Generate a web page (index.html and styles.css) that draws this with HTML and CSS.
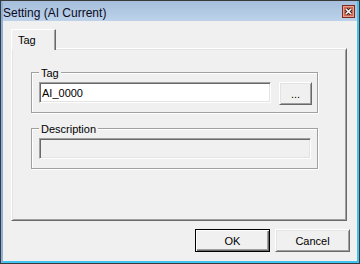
FILE: index.html
```html
<!DOCTYPE html>
<html lang="en">
<head>
    <meta charset="UTF-8">
    <title>Setting (AI Current)</title>
    <link rel="stylesheet" href="styles.css">
</head>
<body>
    <div class="window">
        <div class="frame">
            <div class="titlebar">
                <span class="title">Setting (AI Current)</span>
                <span class="close">
                    <svg width="13" height="13" viewBox="0 0 13 13">
                        <rect x="0.5" y="0.5" width="12" height="12" fill="#cf6b57" stroke="#7a2a1e"/>
                        <rect x="1.5" y="1.5" width="10" height="10" fill="none" stroke="#e6a090"/>
                        <path d="M4 4 L9 9 M9 4 L4 9" stroke="#3a1a14" stroke-width="3.2"/>
                        <path d="M4 4 L9 9 M9 4 L4 9" stroke="#fff" stroke-width="1.6"/>
                    </svg>
                </span>
            </div>

            <div class="client">
                <div class="tabs">
                    <div class="tab">Tag</div>
                </div>

                <div class="panel">
                    <div class="group">
                        <span class="group-label">Tag</span>
                        <div class="row">
                            <input class="textbox" type="text" value="AI_0000">
                            <button class="btn btn-browse">...</button>
                        </div>
                    </div>

                    <div class="group group-desc">
                        <span class="group-label">Description</span>
                        <div class="row">
                            <input class="textbox" type="text" disabled>
                        </div>
                    </div>
                </div>

                <div class="actions">
                    <button class="btn btn-default">OK</button>
                    <button class="btn">Cancel</button>
                </div>
            </div>
        </div>
    </div>
</body>
</html>
```

FILE: styles.css
```css
* {
    box-sizing: border-box;
}
body {
    margin: 0;
    font-family: "Liberation Sans", Arial, sans-serif;
    font-size: 11px;
    color: #000;
    background: #fff;
}
.window {
    width: 360px;
    height: 264px;
    border: 1px solid #3a3a3a;
}
.frame {
    height: 100%;
    display: flex;
    flex-direction: column;
    border-left: 2px solid #8cb2dc;
    border-right: 2px solid #42c2ee;
    border-bottom: 2px solid #42c2ee;
}
.titlebar {
    height: 20px;
    display: flex;
    align-items: flex-start;
    background: linear-gradient(#a6bedb, #bdd2ea);
}
.title {
    font-size: 12px;
    line-height: 14px;
    margin-top: 5px;
    color: #0a0a1e;
}
.close {
    margin-left: auto;
    margin-top: 4px;
    margin-right: 2px;
    width: 13px;
    height: 13px;
}
.close svg {
    display: block;
}
.client {
    flex: 1;
    display: flex;
    flex-direction: column;
    background: #f0f0f0;
    padding: 8px 7px 9px 8px;
}
.tabs {
    display: flex;
}
.tab {
    position: relative;
    z-index: 1;
    width: 45px;
    height: 21px;
    margin-bottom: -2px;
    padding: 4px 0 0 6px;
    line-height: 13px;
    background: #f0f0f0;
    border-top: 1px solid #fff;
    border-left: 1px solid #fff;
    border-right: 1px solid #696969;
    box-shadow: inset -1px 0 #a0a0a0;
}
.panel {
    width: 336px;
    height: 173px;
    border: 1px solid;
    border-color: #fff #696969 #696969 #fff;
    box-shadow: inset 1px 1px #e3e3e3, inset -1px -1px #a0a0a0;
    padding: 23px 0 0 19px;
}
.group {
    position: relative;
    width: 287px;
    border: 1px solid #a0a0a0;
    box-shadow: 1px 1px 0 #fff, inset 1px 1px 0 #fff;
    padding: 9px 5px 7px 7px;
}
.group-desc {
    margin-top: 15px;
    padding: 9px 6px 9px 7px;
}
.group-label {
    position: absolute;
    top: -6px;
    left: 7px;
    padding: 0 2px;
    line-height: 13px;
    background: #f0f0f0;
}
.row {
    display: flex;
    gap: 8px;
    align-items: flex-start;
}
.textbox {
    flex: 1;
    min-width: 0;
    height: 21px;
    margin: 0;
    padding: 0 0 0 2px;
    font: inherit;
    color: #000;
    background: #fff;
    border: 1px solid;
    border-color: #a0a0a0 #fff #fff #a0a0a0;
    box-shadow: inset 1px 1px #696969, inset -1px -1px #e3e3e3;
    outline: none;
}
.textbox:disabled {
    background: #f0f0f0;
}
.btn {
    width: 75px;
    height: 23px;
    margin: 0;
    padding: 0;
    font: inherit;
    color: #000;
    background: #f0f0f0;
    border: 1px solid;
    border-color: #fff #696969 #696969 #fff;
    box-shadow: inset 1px 1px #e3e3e3, inset -1px -1px #a0a0a0;
}
.btn-browse {
    width: 33px;
}
.btn-default {
    border-color: #000;
    box-shadow: inset 1px 1px #fff, inset -1px -1px #696969, inset -2px -2px #a0a0a0;
}
.actions {
    display: flex;
    justify-content: flex-end;
    gap: 5px;
    margin-top: 8px;
}
```
